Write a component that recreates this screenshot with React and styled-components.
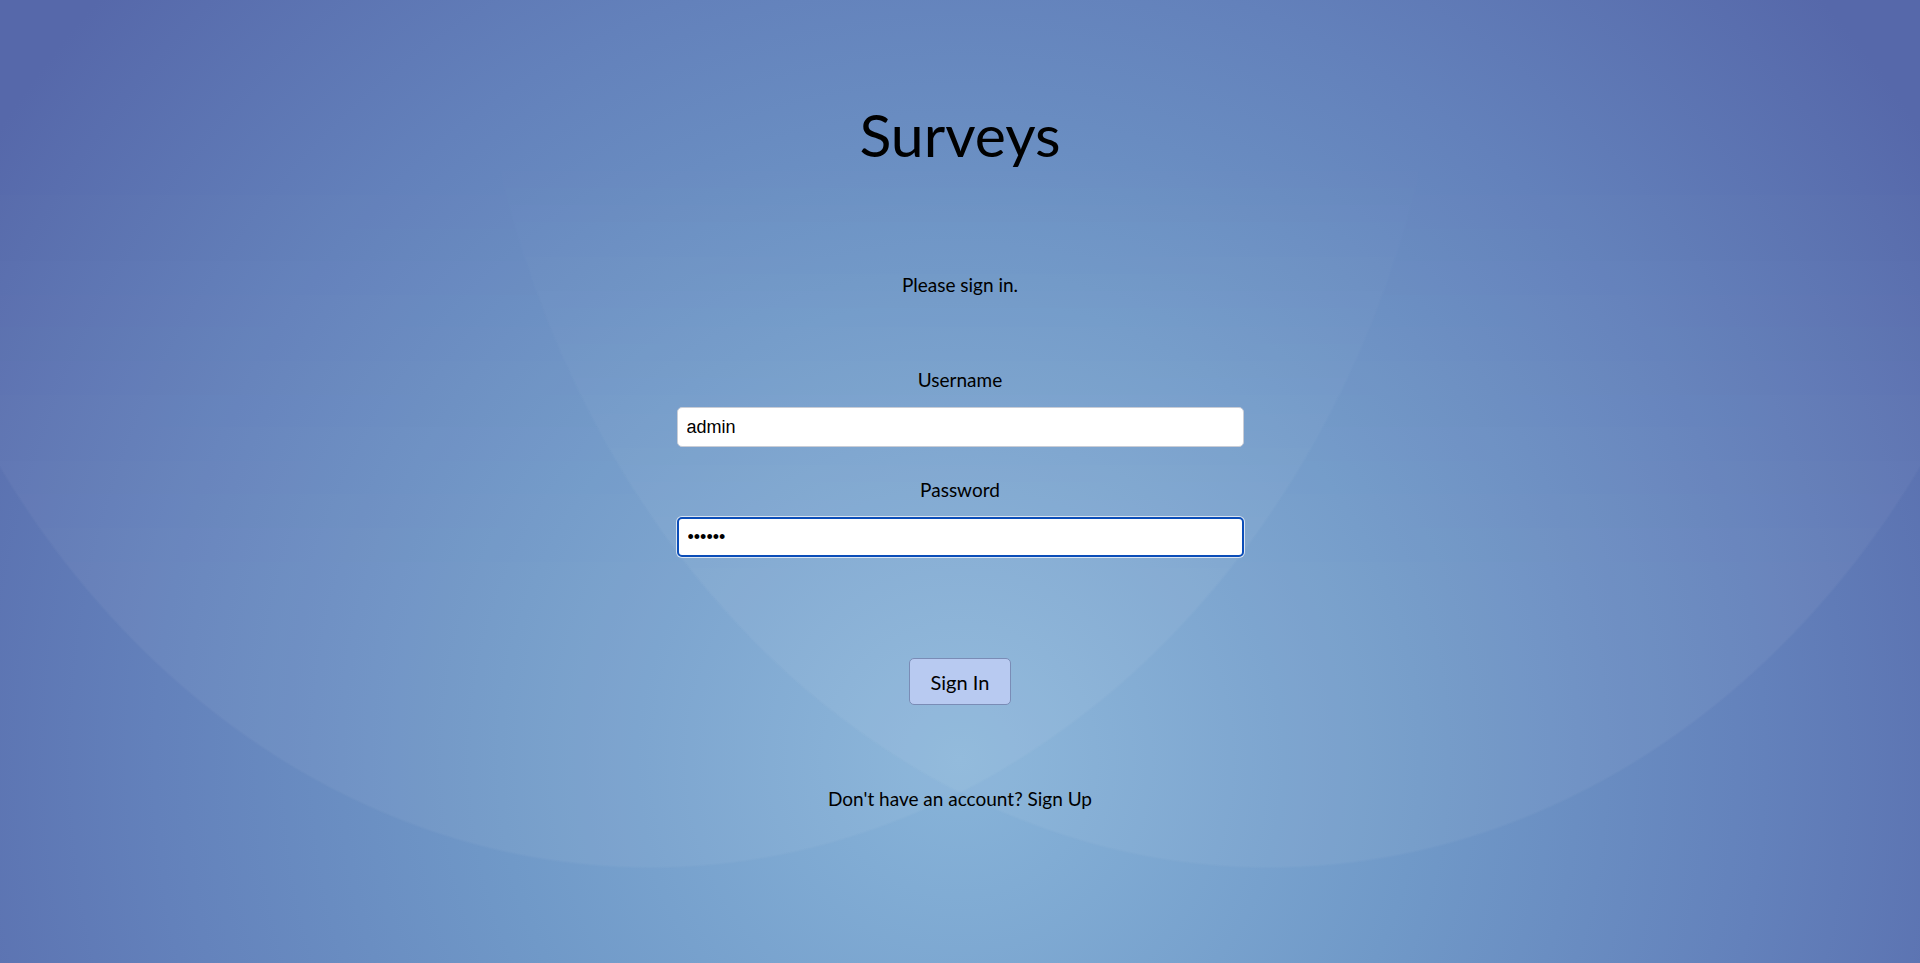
import styled, { createGlobalStyle } from "styled-components";

const GlobalStyle = createGlobalStyle`
  html, body {
    margin: 0;
    padding: 0;
  }
  body {
    font-family: Lato, "Noto Sans", sans-serif;
    color: #000;
  }
`;

const Page = styled.div`
  position: relative;
  isolation: isolate;
  min-height: 100vh;
  overflow: hidden;
  display: flex;
  flex-direction: column;
  align-items: center;
  background-color: #5668aa;
  background-image: radial-gradient(
    1150px 1150px at 960px 760px,
    #88b4d9 0%,
    #7099c8 40%,
    #6381bb 70%,
    #5668aa 100%
  );

  /* two faint overlapping ellipses that show near the bottom */
  &::before {
    content: "";
    position: absolute;
    inset: 0;
    z-index: -1;
    pointer-events: none;
    background-image:
      radial-gradient(802px 964px at 650px -95px, rgba(255, 255, 255, 0.05) 99.7%, rgba(255, 255, 255, 0) 100%),
      radial-gradient(802px 964px at 1270px -95px, rgba(255, 255, 255, 0.05) 99.7%, rgba(255, 255, 255, 0) 100%);
    mask-image: linear-gradient(to bottom, transparent 15%, #000 60%);
    -webkit-mask-image: linear-gradient(to bottom, transparent 15%, #000 60%);
  }
`;

const Title = styled.h1`
  margin: 100px 0 0;
  font-size: 59px;
  line-height: 70px;
  font-weight: 400;
`;

const Intro = styled.p`
  margin: 103px 0 0;
  font-size: 19px;
  line-height: 24px;
`;

const Form = styled.form`
  display: flex;
  flex-direction: column;
  align-items: center;
  margin-top: 71px;
`;

const Field = styled.div`
  display: flex;
  flex-direction: column;
  align-items: center;
  gap: 15px;
  margin-top: ${(props) => props.$top || 0}px;
`;

const Label = styled.label`
  font-size: 19px;
  line-height: 24px;
`;

const Input = styled.input`
  box-sizing: border-box;
  width: 567px;
  height: 40px;
  padding: 0 9px;
  font-family: "Liberation Sans", Arial, sans-serif;
  font-size: 18px;
  color: #000;
  background: #fff;
  border: ${(props) => (props.$focused ? "2px solid #0b4db8" : "1px solid #c9cdd6")};
  border-radius: 5px;
  box-shadow: ${(props) => (props.$focused ? "0 0 0 1px rgba(255,255,255,0.7)" : "none")};
  outline: none;
`;

const Button = styled.button`
  box-sizing: border-box;
  margin-top: 101px;
  width: 102px;
  height: 47px;
  font-family: Lato, "Noto Sans", sans-serif;
  font-size: 20px;
  color: #000;
  background: #b8caf1;
  border: 1px solid #7a8cb6;
  border-radius: 5px;
  cursor: pointer;
`;

const Footer = styled.p`
  margin: 82px 0 0;
  font-size: 19px;
  line-height: 24px;
`;

export default function App() {
  return (
    <>
      <GlobalStyle />
      <Page>
        <Title>Surveys</Title>
        <Intro>Please sign in.</Intro>
        <Form onSubmit={(e) => e.preventDefault()}>
          <Field>
            <Label htmlFor="username">Username</Label>
            <Input id="username" type="text" defaultValue="admin" />
          </Field>
          <Field $top={31}>
            <Label htmlFor="password">Password</Label>
            <Input id="password" type="password" defaultValue="secret" $focused />
          </Field>
          <Button type="submit">Sign In</Button>
        </Form>
        <Footer>Don't have an account? Sign Up</Footer>
      </Page>
    </>
  );
}
